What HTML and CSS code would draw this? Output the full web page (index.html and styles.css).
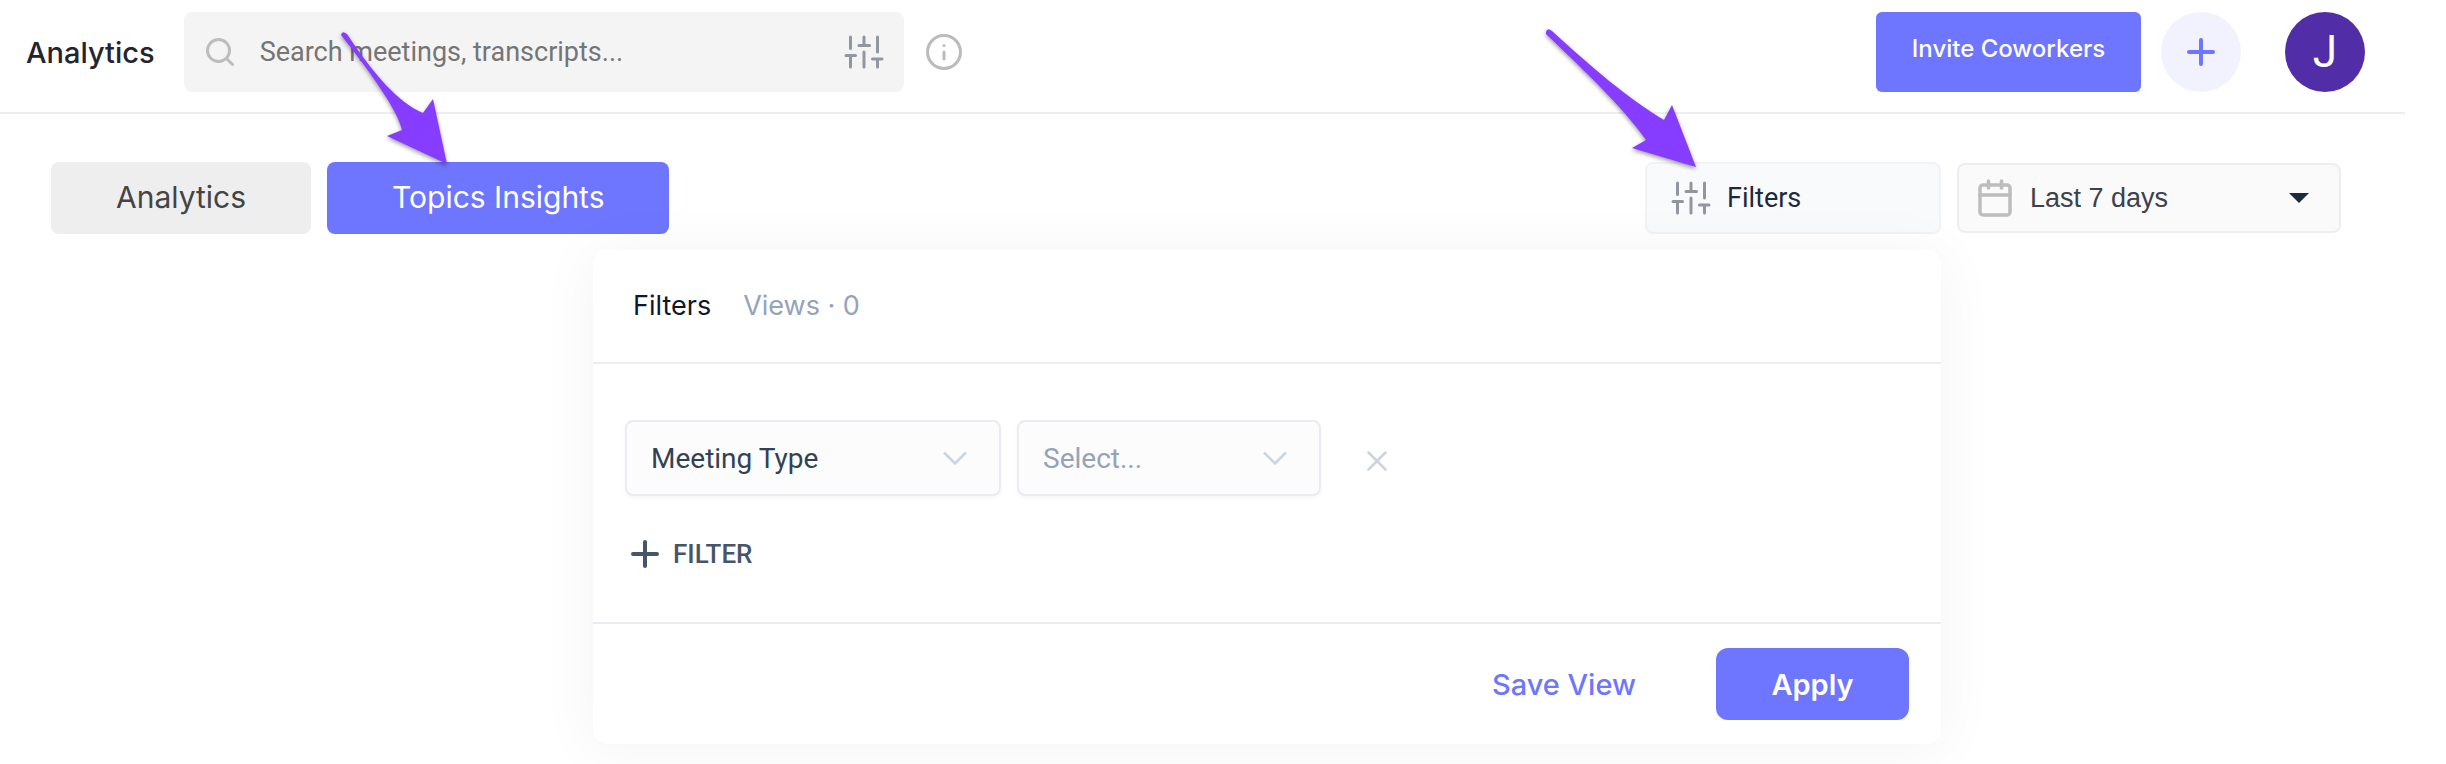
FILE: index.html
```html
<!DOCTYPE html>
<html lang="en">
<head>
    <meta charset="UTF-8">
    <meta name="viewport" content="width=device-width, initial-scale=1.0">
    <title>Analytics</title>
    <link rel="stylesheet" href="styles.css">
</head>
<body>

    <!-- Shared icons -->
    <svg class="sprite" aria-hidden="true">
        <symbol id="sliders" viewBox="0 0 40 34" fill="none" stroke="currentColor" stroke-width="3" stroke-linecap="round">
            <path d="M6.5 2v11.500M2 20.500h9.500M6.500 20.500v11.500M20 2v8.500M15 10.500h10.500M20 17v15M33.500 2v15M28.500 24h9.500M33.500 24v8"/>
        </symbol>
        <symbol id="chevron" viewBox="0 0 24 14" fill="none" stroke="currentColor" stroke-width="2.500">
            <path d="M1 1.500l11 11 11-11"/>
        </symbol>
        <symbol id="plus" viewBox="0 0 28 28" fill="none" stroke="currentColor" stroke-width="4" stroke-linecap="round">
            <path d="M14 2v24M2 14h24"/>
        </symbol>
    </svg>

    <header class="header">
        <h1 class="title">Analytics</h1>
        <div class="search">
            <svg class="search-icon" viewBox="0 0 28 28" fill="none" stroke="currentColor" stroke-width="3" stroke-linecap="round"><circle cx="12.500" cy="12.500" r="11"/><path d="M21 21l5.500 5.500"/></svg>
            <input type="text" class="search-input" placeholder="Search meetings, transcripts..." aria-label="Search meetings">
            <button class="icon-btn sliders-btn" aria-label="Search filters"><svg class="sliders-icon"><use href="#sliders"/></svg></button>
        </div>
        <button class="icon-btn info" aria-label="Info">
            <svg class="info-icon" viewBox="0 0 36 36" fill="none" stroke="currentColor" stroke-width="3" stroke-linecap="round"><circle cx="18" cy="18" r="16.500"/><path d="M18 18v7"/><path d="M18 11.500v.1"/></svg>
        </button>
        <div class="header-actions">
            <button class="invite">Invite Coworkers</button>
            <button class="add" aria-label="Add"><svg class="plus-icon"><use href="#plus"/></svg></button>
            <button class="avatar" aria-label="Account">J</button>
        </div>
    </header>

    <main class="toolbar">
        <nav class="tabs">
            <button class="tab">Analytics</button>
            <button class="tab active">Topics Insights</button>
        </nav>

        <div class="controls">
            <div class="filters">
                <button class="filters-btn"><svg class="sliders-icon"><use href="#sliders"/></svg>Filters</button>

                <section class="panel">
                    <div class="panel-header">
                        <button class="panel-tab active">Filters</button>
                        <button class="panel-tab">Views · 0</button>
                    </div>
                    <div class="panel-body">
                        <div class="filter-row">
                            <div class="select-box type">
                                <select aria-label="Filter type"><option>Meeting Type</option></select>
                                <svg class="chevron-icon"><use href="#chevron"/></svg>
                            </div>
                            <div class="select-box value">
                                <select aria-label="Filter value"><option>Select...</option></select>
                                <svg class="chevron-icon"><use href="#chevron"/></svg>
                            </div>
                            <button class="icon-btn remove" aria-label="Remove filter">
                                <svg class="remove-icon" viewBox="0 0 20 20" fill="none" stroke="currentColor" stroke-width="2.500" stroke-linecap="round"><path d="M1.500 1.500l17 17M18.500 1.500l-17 17"/></svg>
                            </button>
                        </div>
                        <button class="icon-btn add-filter"><svg class="plus-icon"><use href="#plus"/></svg>FILTER</button>
                    </div>
                    <div class="panel-footer">
                        <button class="save">Save View</button>
                        <button class="apply">Apply</button>
                    </div>
                </section>
            </div>

            <div class="date">
                <svg class="calendar-icon" viewBox="0 0 34 38" fill="none" stroke="currentColor" stroke-width="3.500" stroke-linecap="round"><rect x="2" y="6" width="30" height="30" rx="3"/><path d="M2 16h30M10.500 2v7M23.500 2v7"/></svg>
                <select aria-label="Date range"><option>Last 7 days</option></select>
                <svg class="caret-icon" viewBox="0 0 20 10"><path d="M0 0h20L10 10z" fill="currentColor"/></svg>
            </div>
        </div>
    </main>

    <!-- Pointer arrows -->
    <svg class="arrow arrow-tabs" viewBox="0 0 110 136" aria-hidden="true"><path d="M1 5Q2 0 7 4C35 46 58 72 83 83L93 69 107 134 47 106 62 100C58 82 35 48 1 5z" fill="#863dff"/></svg>
    <svg class="arrow arrow-filters" viewBox="0 0 152 142" aria-hidden="true"><path d="M1 4Q2 -1 7 3C45 38 85 72 119 92L127 77 151 139 87 120 101 112C80 82 45 48 1 6z" fill="#863dff"/></svg>

</body>
</html>
```

FILE: styles.css
```css
* {
    box-sizing: border-box;
}

body {
    font-family: Inter, sans-serif;
    font-size: 28px;
    margin: 0;
    min-height: 100vh;
    padding-right: 41px;
    background-color: #fff;
    color: #22252e;
}

button, input, select {
    font: inherit;
    color: inherit;
    margin: 0;
    padding: 0;
    border: none;
    background: none;
    cursor: pointer;
}

svg {
    display: block;
    flex: none;
}

.sprite {
    display: none;
}

.icon-btn {
    display: flex;
    align-items: center;
}

/* Header */
.header {
    display: flex;
    align-items: center;
    padding: 12px 40px 20px 26px;
    border-bottom: 2px solid #eee;
}

.title {
    margin: 0 29px 0 0;
    font-size: 29px;
    font-weight: 500;
}

.search {
    display: flex;
    align-items: center;
    width: 720px;
    height: 80px;
    padding: 0 20px 0 22px;
    background-color: #f4f4f4;
    border-radius: 8px;
}

.search-icon {
    width: 28px;
    height: 28px;
    margin-right: 26px;
    color: #bdbdbd;
}

.search-input {
    flex: 1;
    min-width: 0;
    font-family: Roboto, sans-serif;
    font-size: 27px;
    outline: none;
}

.search-input::placeholder {
    color: #757575;
}

.sliders-icon {
    width: 40px;
    height: 34px;
    color: #91969f;
}

.info {
    margin-left: 22px;
    color: #bbb;
}

.info-icon {
    width: 36px;
    height: 36px;
}

.header-actions {
    display: flex;
    align-items: center;
    margin-left: auto;
}

.invite {
    width: 265px;
    height: 80px;
    padding-bottom: 8px;
    background-color: #6e76ff;
    border-radius: 6px;
    color: #fff;
    font-size: 24px;
    font-weight: 500;
}

.add, .avatar {
    display: flex;
    align-items: center;
    justify-content: center;
    width: 80px;
    height: 80px;
    border-radius: 50%;
}

.add {
    margin: 0 44px 0 20px;
    background-color: #f2f2ff;
    color: #6e76ff;
}

.avatar {
    background-color: #512da8;
    color: #fff;
    font-family: Roboto, sans-serif;
    font-size: 44px;
}

.plus-icon {
    width: 28px;
    height: 28px;
}

/* Toolbar */
.toolbar {
    display: flex;
    justify-content: space-between;
    padding: 48px 64px 0 51px;
}

.tabs, .controls {
    display: flex;
    align-items: center;
    gap: 16px;
}

.tab {
    height: 72px;
    padding: 0 65px 2px;
    background-color: #eee;
    border-radius: 8px;
    color: #444;
    font-size: 30px;
}

.tab.active {
    background-color: #6e76ff;
    color: #fff;
}

.filters {
    position: relative;
}

.filters-btn {
    display: flex;
    align-items: center;
    gap: 16px;
    width: 296px;
    height: 72px;
    padding: 0 24px;
    background-color: #f8fafc;
    border: 2px solid #f1f3f6;
    border-radius: 8px;
    color: #1e293b;
    font-family: Roboto, sans-serif;
    font-size: 27px;
}

.date {
    display: flex;
    align-items: center;
    width: 384px;
    height: 70px;
    padding: 0 30px 0 19px;
    background-color: #fafafa;
    border: 2px solid #eee;
    border-radius: 8px;
    color: #3d414a;
    font-family: "Liberation Sans", Arial, sans-serif;
    font-size: 27px;
}

.calendar-icon {
    width: 34px;
    height: 38px;
    margin-right: 18px;
    color: #bdbdbd;
}

.caret-icon {
    width: 20px;
    height: 10px;
    color: #1e293b;
}

select {
    flex: 1;
    min-width: 0;
    appearance: none;
    outline: none;
}

/* Filters panel */
.panel {
    position: absolute;
    top: 88px;
    right: 0;
    width: 1348px;
    background-color: #fff;
    border-radius: 14px;
    box-shadow: 0 4px 60px rgba(0, 0, 0, 0.05);
}

.panel-header {
    display: flex;
    align-items: center;
    gap: 32px;
    height: 114px;
    padding: 0 40px 2px;
    border-bottom: 2px solid #ebebf2;
}

.panel-tab {
    color: #94a3b8;
    font-size: 27px;
}

.panel-tab.active {
    color: #0f172a;
}

.panel-body {
    height: 260px;
    padding: 56px 32px 0;
    border-bottom: 2px solid #ebebf2;
    font-family: Roboto, sans-serif;
}

.filter-row {
    display: flex;
    align-items: center;
    gap: 16px;
}

.select-box {
    display: flex;
    align-items: center;
    height: 76px;
    padding: 0 32px 0 24px;
    background-color: #fcfcfd;
    border: 2px solid #ebebf2;
    border-radius: 8px;
    box-shadow: 0 2px 4px rgba(0, 0, 0, 0.04);
}

.type {
    width: 376px;
    color: #334155;
}

.value {
    width: 304px;
    color: #94a3b8;
}

.chevron-icon {
    width: 24px;
    height: 14px;
    color: #cbd5e1;
}

.remove {
    margin-left: 30px;
    padding-top: 6px;
    color: #cdd3de;
}

.remove-icon {
    width: 20px;
    height: 20px;
}

.add-filter {
    gap: 14px;
    margin-top: 43px;
    padding-left: 6px;
    color: #475569;
    font-size: 26px;
    font-weight: 500;
}

.panel-footer {
    display: flex;
    align-items: center;
    justify-content: flex-end;
    gap: 80px;
    height: 120px;
    padding: 0 32px;
}

.save {
    color: #6e76ff;
    font-size: 29px;
    font-weight: 500;
}

.apply {
    width: 193px;
    height: 72px;
    background-color: #6e76ff;
    border-radius: 12px;
    color: #fff;
    font-size: 29px;
    font-weight: 600;
}

/* Arrows lie over the page */
.arrow {
    position: absolute;
    filter: drop-shadow(0 2px 2px rgba(0, 0, 0, 0.4));
}

.arrow-tabs {
    top: 30px;
    left: 340px;
    width: 110px;
    height: 136px;
}

.arrow-filters {
    top: 28px;
    left: 1545px;
    width: 152px;
    height: 142px;
}
```
